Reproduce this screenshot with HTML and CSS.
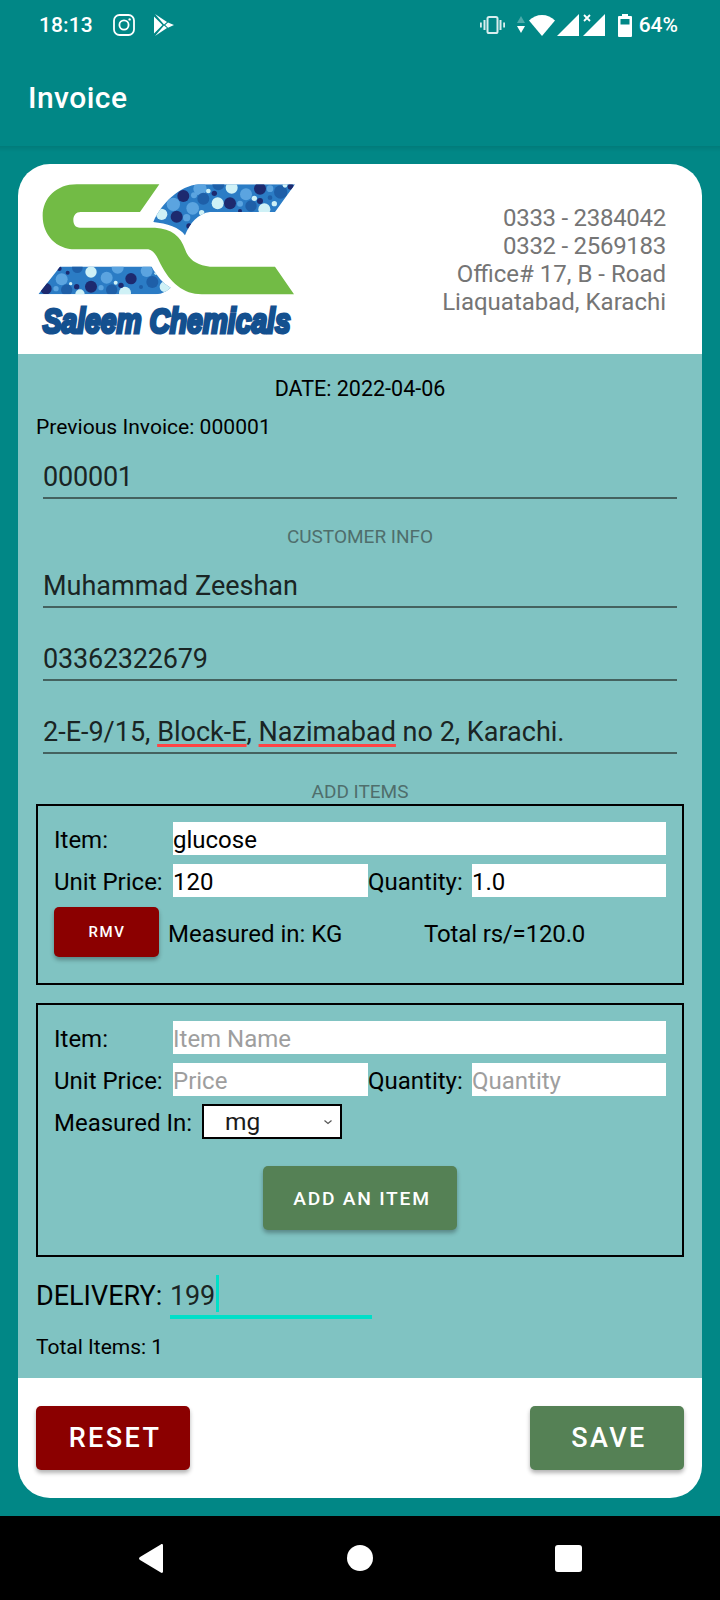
FILE: index.html
```html
<!DOCTYPE html>
<html lang="en">
<head>
<meta charset="utf-8">
<title>Invoice</title>
<link rel="stylesheet" href="styles.css">
</head>
<body>
<div class="screen">
  <header class="status">
    <span class="time">18:13</span>
    <svg class="ic-insta" width="22" height="22" viewBox="0 0 22 22"><rect x="1" y="1" width="20" height="20" rx="5.5" fill="none" stroke="#fff" stroke-width="1.8"/><circle cx="11" cy="11" r="4.6" fill="none" stroke="#fff" stroke-width="1.8"/><circle cx="16.6" cy="5.4" r="1.2" fill="#fff"/></svg>
    <svg class="ic-play" width="20" height="22" viewBox="0 0 20 22"><path d="M0 2.500V19.500L8.500 11zM1 0L13 8 10 10.500zM1 22L13 14 10 11.500zM14 8.500L20 11 14 13.800 11.200 11z" fill="#fff"/></svg>
    <div class="status-right">
      <svg class="ic-vib" width="25" height="18" viewBox="0 0 25 18"><rect x="7.5" y="1" width="10" height="16" rx="1.6" fill="none" stroke="#d8eeee" stroke-width="2"/><path d="M3.5 4h2v10h-2zM19.5 4h2v10h-2zM0 6.500h1.800v5H0zM23.200 6.500H25v5h-1.800z" fill="#d8eeee"/></svg>
      <svg class="ic-arrows" width="8" height="18" viewBox="0 0 8 18"><path d="M4 0l4 7H0z" fill="#4dabaa"/><path d="M0 10h8l-4 7z" fill="#fff"/></svg>
      <svg class="ic-wifi" width="26" height="21" viewBox="0 0 26 21"><path d="M13 21L0 5.500C3.500 2 8 0 13 0s9.500 2 13 5.500z" fill="#fff"/></svg>
      <svg class="ic-sig" width="22" height="22" viewBox="0 0 22 22"><path d="M22 0v22H0z" fill="#fff"/></svg>
      <svg class="ic-sig2" width="22" height="22" viewBox="0 0 22 22"><path d="M22 0v22H0z" fill="#fff"/><path d="M1 1l6 6M7 1l-6 6" stroke="#fff" stroke-width="1.800"/></svg>
      <svg class="ic-batt" width="14" height="23" viewBox="0 0 14 23"><path fill-rule="evenodd" d="M4 0h6v2h3a1 1 0 0 1 1 1v19a1 1 0 0 1-1 1H1a1 1 0 0 1-1-1V3a1 1 0 0 1 1-1h3zM2.500 5v5.500h9V5z" fill="#fff"/></svg>
      <span class="pct">64%</span>
    </div>
  </header>
  <div class="appbar"><h1 class="title">Invoice</h1></div>
  <main class="content">
    <section class="card">
      <div class="card-head">
        <svg class="logo" width="300" height="189" viewBox="0 0 900 567">
          <defs>
            <clipPath id="blueClip">
              <path d="M825 55H535C480 60 425 110 400 168C440 172 480 185 495 208C510 170 535 142 570 138H765Z"/>
              <path d="M55 385L120 302H395C410 330 430 352 452 365C435 380 420 385 400 385Z"/>
            </clipPath>
          </defs>
          <rect x="40" y="40" width="800" height="350" fill="#2b7cc5" clip-path="url(#blueClip)"/>
          <g clip-path="url(#blueClip)">
            <g fill="#5ba4e0">
              <circle cx="540" cy="68" r="20"/><circle cx="678" cy="85" r="18"/><circle cx="750" cy="68" r="10"/><circle cx="460" cy="115" r="20"/><circle cx="518" cy="127" r="19"/><circle cx="522" cy="88" r="9"/><circle cx="660" cy="113" r="9"/><circle cx="500" cy="155" r="11"/><circle cx="125" cy="340" r="18"/><circle cx="108" cy="368" r="8"/><circle cx="243" cy="365" r="8"/><circle cx="260" cy="335" r="18"/><circle cx="293" cy="305" r="18"/><circle cx="380" cy="315" r="18"/>
            </g>
            <g fill="#1e5fa8">
              <circle cx="595" cy="55" r="18"/><circle cx="782" cy="78" r="20"/><circle cx="550" cy="98" r="18"/><circle cx="693" cy="120" r="17"/><circle cx="750" cy="95" r="7"/><circle cx="140" cy="372" r="17"/><circle cx="172" cy="305" r="16"/><circle cx="275" cy="372" r="17"/><circle cx="363" cy="363" r="6"/><circle cx="397" cy="348" r="18"/>
            </g>
            <g fill="#cff1f6">
              <circle cx="565" cy="75" r="7"/><circle cx="635" cy="65" r="18"/><circle cx="795" cy="58" r="7"/><circle cx="425" cy="145" r="17"/><circle cx="593" cy="112" r="18"/><circle cx="703" cy="97" r="8"/><circle cx="733" cy="130" r="18"/><circle cx="763" cy="113" r="8"/><circle cx="545" cy="140" r="8"/><circle cx="213" cy="318" r="17"/><circle cx="152" cy="353" r="5"/><circle cx="287" cy="350" r="6"/><circle cx="315" cy="380" r="18"/><circle cx="408" cy="322" r="5"/><circle cx="435" cy="362" r="16"/><circle cx="180" cy="384" r="14"/>
            </g>
            <g fill="#1d2a6f">
              <circle cx="490" cy="90" r="18"/><circle cx="720" cy="68" r="18"/><circle cx="812" cy="62" r="9"/><circle cx="470" cy="152" r="18"/><circle cx="583" cy="82" r="8"/><circle cx="630" cy="112" r="18"/><circle cx="720" cy="105" r="9"/><circle cx="507" cy="180" r="8"/><circle cx="660" cy="135" r="6"/><circle cx="78" cy="368" r="17"/><circle cx="143" cy="320" r="6"/><circle cx="118" cy="308" r="7"/><circle cx="170" cy="362" r="8"/><circle cx="213" cy="362" r="18"/><circle cx="303" cy="358" r="8"/><circle cx="333" cy="338" r="17"/>
            </g>
          </g>
          <path d="M418 55H170C110 55 68 95 68 150C68 208 110 250 165 250H385C405 255 412 275 422 295C450 350 490 385 545 385H822L765 302H570C530 298 505 280 495 250C482 210 455 188 405 185H180C166 185 160 175 160 162C160 148 168 138 182 138H360Z" fill="#72bb45"/>
          <text class="logo-text" transform="translate(68 500) scale(1 1.34)" x="0" y="0" textLength="744" lengthAdjust="spacingAndGlyphs">Saleem Chemicals</text>
        </svg>
        <address class="contact">
          <div class="tight">0333 - 2384042</div>
          <div class="tight">0332 - 2569183</div>
          <div>Office# 17, B - Road</div>
          <div>Liaquatabad, Karachi</div>
        </address>
      </div>
      <div class="panel">
        <div class="date">DATE: 2022-04-06</div>
        <div class="prev">Previous Invoice: 000001</div>
        <div class="field field-first digits">000001</div>
        <div class="section section-customer">CUSTOMER INFO</div>
        <div class="field field-name">Muhammad Zeeshan</div>
        <div class="field field-next digits">03362322679</div>
        <div class="field field-next">2-E-9/15, <span class="spell">Block-E</span>, <span class="spell">Nazimabad</span> no 2, Karachi.</div>
        <div class="section section-items">ADD ITEMS</div>

        <div class="box box-item">
          <div class="grid">
            <div class="label">Item:</div>
            <div class="input span3">glucose</div>
            <div class="label">Unit Price:</div>
            <div class="input">120</div>
            <div class="label">Quantity:</div>
            <div class="input">1.0</div>
          </div>
          <div class="item-foot">
            <button class="btn btn-rmv">RMV</button>
            <div class="label measured">Measured in: KG</div>
            <div class="label total-price">Total rs/=120.0</div>
          </div>
        </div>

        <div class="box box-add">
          <div class="grid">
            <div class="label">Item:</div>
            <div class="input span3 hint">Item Name</div>
            <div class="label">Unit Price:</div>
            <div class="input hint">Price</div>
            <div class="label">Quantity:</div>
            <div class="input hint">Quantity</div>
          </div>
          <div class="measure-row">
            <div class="label measure-label">Measured In:</div>
            <div class="select"><span>mg</span><svg width="10" height="6" viewBox="0 0 10 6"><path d="M1.500 1.500L5 4.500l3.500-3" fill="none" stroke="#555" stroke-width="1.200"/></svg></div>
          </div>
          <button class="btn btn-add">ADD AN ITEM</button>
        </div>

        <div class="delivery">
          <div class="delivery-label">DELIVERY:</div>
          <div class="delivery-input"><span>199</span><i class="caret"></i></div>
        </div>
        <div class="total-items">Total Items: 1</div>
      </div>
      <div class="card-foot">
        <button class="btn btn-big btn-reset">RESET</button>
        <button class="btn btn-big btn-save">SAVE</button>
      </div>
    </section>
  </main>
  <nav class="navbar">
    <svg width="24" height="29" viewBox="0 0 24 29"><path d="M24 1.500v26c0 1.400-1.200 1.800-2.200 1L1 16c-1.300-.8-1.300-2.200 0-3L21.800.5c1-.8 2.200-.4 2.200 1z" fill="#fff"/></svg>
    <span class="nav-circle"></span>
    <span class="nav-square"></span>
  </nav>
</div>
</body>
</html>
```

FILE: styles.css
```css
* { box-sizing: border-box; }
html, body { margin: 0; padding: 0; }
body { font-family: Roboto, "Liberation Sans", sans-serif; color: #000; }
.screen { width: 720px; height: 1600px; background: #018786; display: flex; flex-direction: column; overflow: hidden; }

.status { height: 50px; flex: none; display: flex; align-items: center; padding-left: 39px; color: #fff; }
.time { font-size: 21px; font-weight: 500; letter-spacing: .1px; width: 54px; }
.ic-insta { margin-left: 20px; }
.ic-play { margin-left: 19px; }
.status-right { margin-left: auto; display: flex; align-items: center; padding-right: 42px; }
.ic-arrows { margin-left: 12px; }
.ic-wifi { margin-left: 4px; }
.ic-sig { margin-left: 2px; }
.ic-sig2 { margin-left: 4px; }
.ic-batt { margin-left: 13px; }
.pct { font-size: 21px; font-weight: 500; margin-left: 7px; }

.appbar { height: 96px; flex: none; display: flex; align-items: center; padding: 0 0 2px 28px; }
.title { margin: 0; font-size: 30px; font-weight: 500; color: #fff; letter-spacing: .45px; }

.content { height: 1370px; flex: none; padding: 18px 18px 0; background: linear-gradient(#017b7a, #018786 6px); }
.card { width: 684px; height: 1334px; background: #fff; border-radius: 32px; overflow: hidden; display: flex; flex-direction: column; }

.card-head { height: 190px; flex: none; display: flex; justify-content: space-between; align-items: center; padding: 0 36px 0 2px; }
.logo { flex: none; margin-top: 2px; }
.logo-text { font-family: "Liberation Sans", sans-serif; font-weight: 700; font-style: italic; font-size: 80px; fill: #14508f; stroke: #14508f; stroke-width: 7px; }
.contact { font-style: normal; font-size: 24px; line-height: 28px; color: #757575; text-align: right; padding-top: 2px; }
.tight { letter-spacing: -.28px; }

.panel { height: 1024px; flex: none; background: #80c3c2; padding: 20px 18px 0; }
.date { font-size: 21.5px; line-height: 30px; text-align: center; }
.prev { font-size: 21.1px; line-height: 28px; margin-top: 9px; }
.field { margin: 0 7px; height: 41px; border-bottom: 2px solid #44625f; font-size: 27px; line-height: 39px; color: #1a2524; }
.digits { letter-spacing: -.2px; }
.field-first { margin-top: 17px; }
.field-name { margin-top: 18px; }
.field-next { margin-top: 32px; }
.spell { text-decoration: underline; text-decoration-color: #ff4444; text-decoration-thickness: 3px; text-underline-offset: 3px; }
.section { font-size: 19px; line-height: 24px; text-align: center; color: #4f6e6c; }
.section-customer { margin-top: 26px; }
.section-items { margin-top: 26px; }

.box { border: 2px solid #000; padding: 16px 16px 0; }
.box-item { height: 181px; }
.box-add { height: 254px; margin-top: 18px; }
.grid { display: grid; grid-template-columns: 119px 195px 104px 1fr; row-gap: 9px; }
.span3 { grid-column: span 3; }
.label { font-size: 24px; height: 33px; line-height: 37px; white-space: nowrap; }
.input { background: #fff; height: 33px; font-size: 24px; line-height: 37px; overflow: hidden; }
.hint { color: #9e9e9e; }
.total-price { letter-spacing: -.15px; }

.btn { display: block; border: 0; padding: 0; margin: 0; font-family: inherit; font-weight: 500; color: #fff; border-radius: 5px; text-align: center; box-shadow: 0 3px 4px rgba(0, 0, 0, .3); }
.item-foot { display: flex; align-items: center; margin-top: 10px; }
.btn-rmv { width: 105px; height: 50px; flex: none; background: #8b0000; font-size: 15px; letter-spacing: 1.6px; padding-left: 1px; }
.measured { width: 256px; margin-left: 9px; }

.measure-row { display: flex; align-items: center; margin-top: 8px; }
.measure-label { width: 148px; }
.select { width: 140px; height: 35px; border: 2px solid #000; background: #fff; display: flex; align-items: center; justify-content: space-between; padding: 0 7px 0 21px; font-size: 24.5px; color: #1a1a1a; }
.btn-add { width: 194px; height: 64px; margin: 27px auto 0; background: #558155; font-size: 19.2px; letter-spacing: 1.75px; padding-left: 4px; }

.delivery { display: flex; margin-top: 18px; height: 44px; }
.delivery-label { width: 134px; font-size: 27px; line-height: 42px; }
.delivery-input { width: 202px; height: 44px; border-bottom: 4px solid #00dfc8; display: flex; align-items: flex-start; font-size: 27px; line-height: 42px; color: #1a2524; letter-spacing: -.2px; }
.caret { display: block; width: 3.5px; height: 37px; background: #00dfc8; margin-left: 1px; }
.total-items { font-size: 21px; line-height: 28px; margin-top: 14px; }

.card-foot { flex: 1; display: flex; justify-content: space-between; padding: 28px 18px 0; }
.btn-big { width: 154px; height: 64px; font-size: 27px; letter-spacing: 2.4px; padding-left: 4px; }
.btn-reset { background: #8b0000; }
.btn-save { background: #558155; }

.navbar { flex: 1; background: #000; display: flex; align-items: center; padding: 0 0 0 139px; }
.nav-circle { width: 26px; height: 26px; border-radius: 50%; background: #fff; margin-left: 184px; }
.nav-square { width: 27px; height: 27px; border-radius: 3px; background: #fff; margin-left: 182px; }
```
